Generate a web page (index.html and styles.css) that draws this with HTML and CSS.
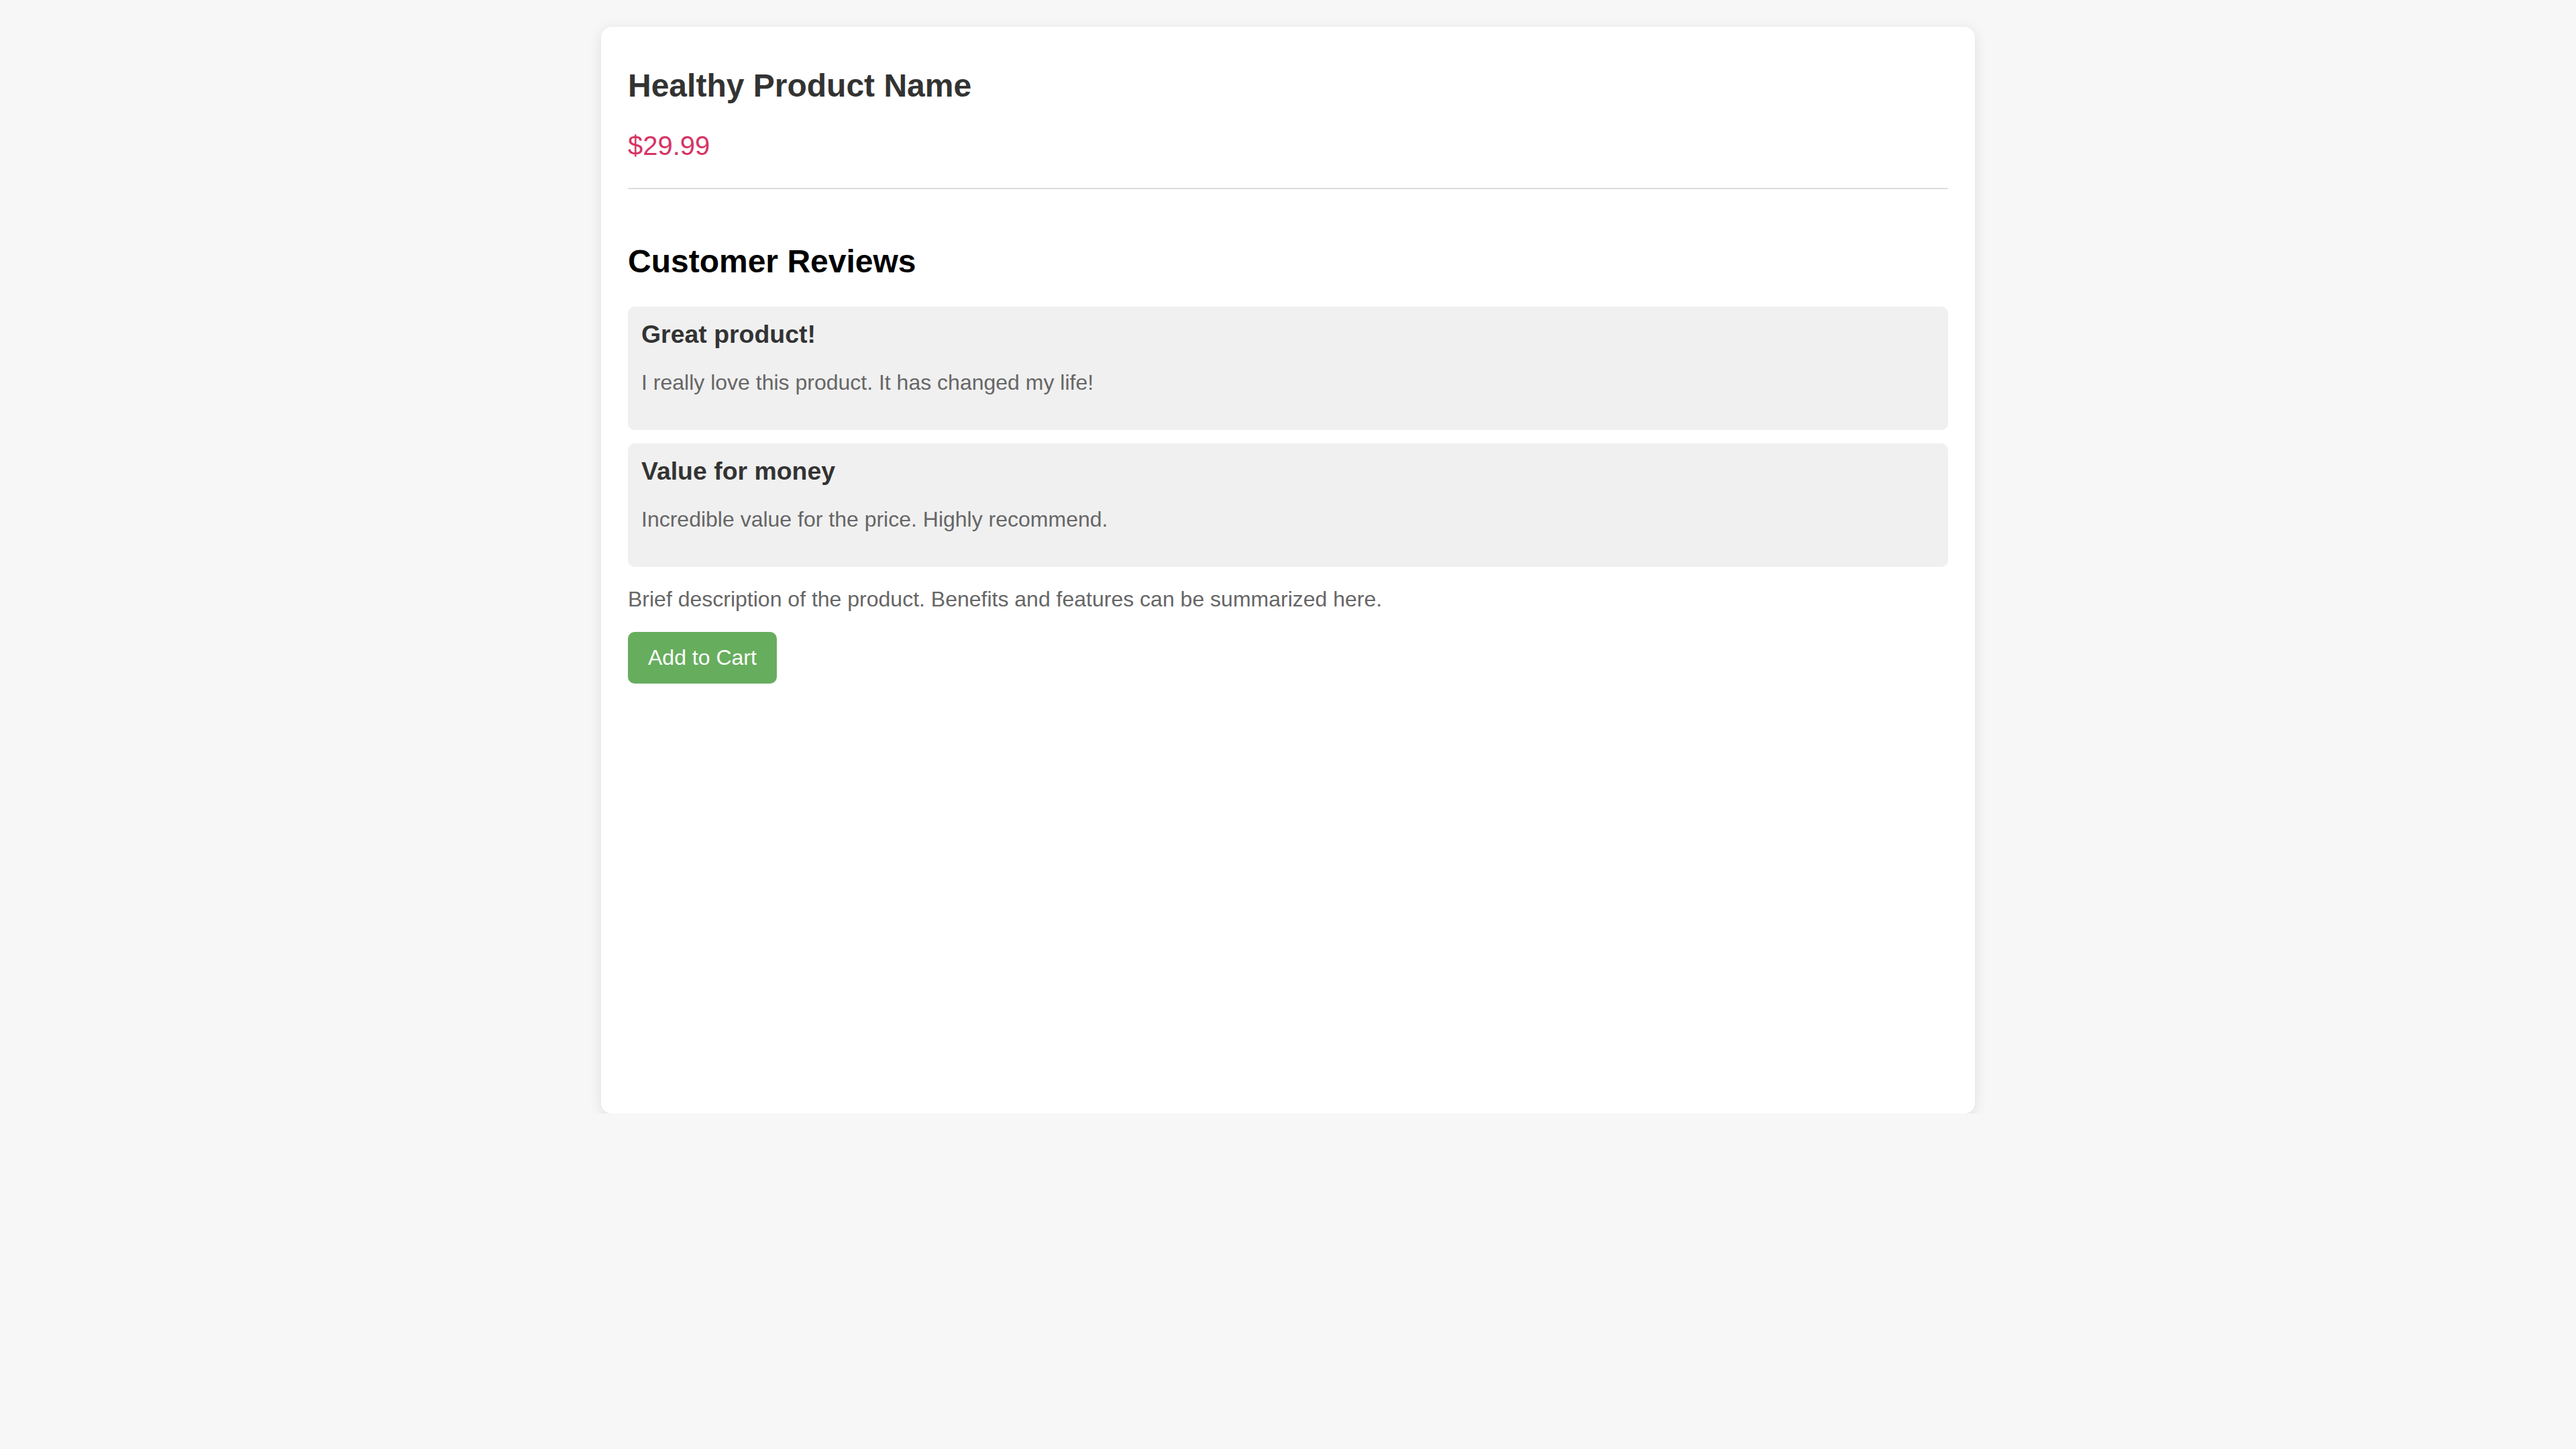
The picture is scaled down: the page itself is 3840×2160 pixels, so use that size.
FILE: index.html
```html
<!DOCTYPE html>
<html lang="en">
<head>
<meta charset="utf-8">
<title>Healthy Product</title>
<link rel="stylesheet" href="styles.css">
</head>
<body>
<main class="card">
  <header class="product-header">
    <h1 class="product-title">Healthy Product Name</h1>
    <p class="product-price">$29.99</p>
  </header>
  <section class="reviews">
    <h2 class="reviews-title">Customer Reviews</h2>
    <article class="review">
      <h3 class="review-title">Great product!</h3>
      <p class="review-text">I really love this product. It has changed my life!</p>
    </article>
    <article class="review">
      <h3 class="review-title">Value for money</h3>
      <p class="review-text">Incredible value for the price. Highly recommend.</p>
    </article>
  </section>
  <p class="product-description">Brief description of the product. Benefits and features can be summarized here.</p>
  <button class="add-to-cart" type="button">Add to Cart</button>
</main>
</body>
</html>
```

FILE: styles.css
```css
* {
  box-sizing: border-box;
}

html, body {
  margin: 0;
  padding: 0;
}

body {
  background: #f7f7f7;
  font-family: "Liberation Sans", Arial, sans-serif;
  color: #000;
}

.card {
  display: block;
  width: 2048px;
  height: 1620px;
  margin: 40px auto 0;
  padding: 40px;
  background: #ffffff;
  border-radius: 16px;
  box-shadow: 0 4px 20px rgba(0, 0, 0, 0.1);
}

.product-header {
  border-bottom: 2px solid #dddddd;
  margin-bottom: 80px;
  padding-top: 20px;
}

.product-title {
  margin: 0;
  font-size: 48px;
  font-weight: bold;
  color: #333333;
}

.product-price {
  margin: 40px 0;
  font-size: 40px;
  color: #d63465;
}

.reviews-title {
  margin: 0 0 40px;
  font-size: 48px;
  font-weight: bold;
  color: #000;
}

.review {
  background: #f0f0f0;
  border-radius: 10px;
  padding: 20px 20px;
  margin-bottom: 20px;
}

.review-title {
  margin: 0;
  font-size: 37.44px;
  font-weight: bold;
  color: #333333;
}

.review-text {
  margin: 32px 0;
  font-size: 32px;
  color: #666666;
}

.product-description {
  margin: 30px 0 30px;
  font-size: 32px;
  color: #666666;
}

.add-to-cart {
  display: inline-block;
  padding: 20px 30px;
  font-family: "Liberation Sans", Arial, sans-serif;
  font-size: 32px;
  line-height: normal;
  color: #ffffff;
  background: #67ad5e;
  border: none;
  border-radius: 10px;
  cursor: pointer;
}
```
